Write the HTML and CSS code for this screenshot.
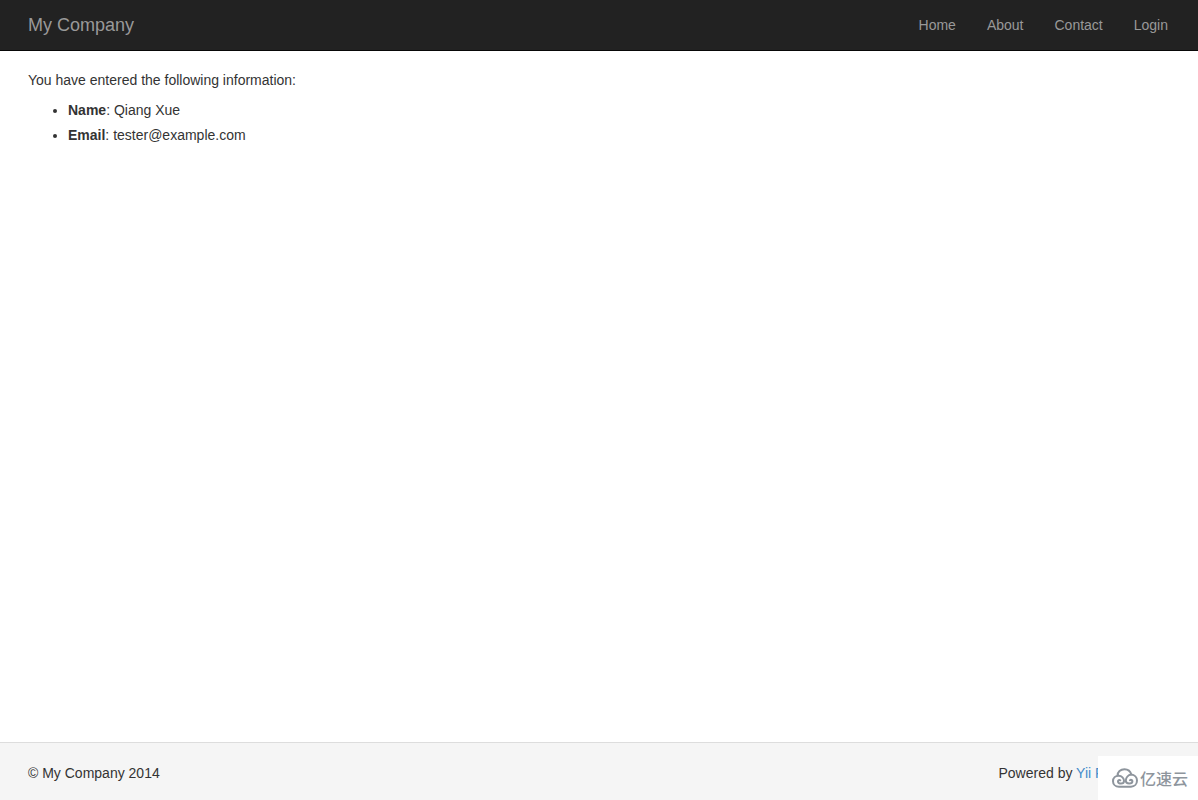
FILE: index.html
```html
<!DOCTYPE html>
<html lang="en">
<head>
<meta charset="utf-8">
<title>My Company</title>
<link rel="stylesheet" href="styles.css">
</head>
<body>
<header class="navbar">
  <a class="brand" href="#">My Company</a>
  <nav class="nav">
    <a class="nav-link" href="#">Home</a>
    <a class="nav-link" href="#">About</a>
    <a class="nav-link" href="#">Contact</a>
    <a class="nav-link" href="#">Login</a>
  </nav>
</header>
<main class="content">
  <p class="intro">You have entered the following information:</p>
  <ul class="entries">
    <li><strong>Name</strong>: Qiang Xue</li>
    <li><strong>Email</strong>: tester@example.com</li>
  </ul>
</main>
<footer class="footer">
  <span>© My Company 2014</span>
  <span>Powered by <a class="footer-link" href="#">Yii Framework</a></span>
</footer>
<div class="badge">
  <svg class="badge-icon" viewBox="0 0 26 20" aria-hidden="true">
    <path d="M5.500 7.800C5.500 4 8.500 1.200 12.500 1.200C16 1.200 18.500 3.300 19.300 6.500C22.500 6.700 25 9.300 25 12.500C25 16 22.500 18.700 19 18.700H7C3.500 18.700 1 16.300 1 13.200C1 10 3.500 7.800 6.700 7.800C9.800 7.800 12 10.300 12 13C12 14.800 10.500 15.600 9 15.600C7.400 15.600 6 14.900 6 13.500C6 12.300 7.300 11.800 8.300 12.300"/>
    <path d="M19.300 6.500C16.200 7 13.800 9.500 13.800 12.600C13.800 14.600 15.400 15.600 17.200 15.600C18.900 15.600 20.400 14.800 20.400 13.300C20.400 12 18.900 11.500 17.900 12.200"/>
  </svg>
  <span>亿速云</span>
</div>
</body>
</html>
```
FILE: styles.css
```css
* {
  box-sizing: border-box;
}

body {
  display: flex;
  flex-direction: column;
  min-height: 100vh;
  margin: 0;
  background: #fff;
  color: #333;
  font: 14px/20px "Liberation Sans", Arial, sans-serif;
}

a {
  text-decoration: none;
}

.navbar {
  display: flex;
  align-items: center;
  justify-content: space-between;
  padding: 15px 30px 15px 28px;
  background: #222;
  border-bottom: 1px solid #080808;
}

.brand {
  color: #999;
  font-size: 18px;
}

.nav {
  display: flex;
  gap: 31px;
}

.nav-link {
  color: #999;
}

.content {
  flex: 1;
  padding: 19px 28px;
}

.intro {
  margin: 0 0 8px;
}

.entries {
  margin: 0;
  padding-left: 40px;
  line-height: 25px;
}

.footer {
  display: flex;
  justify-content: space-between;
  padding: 20px 33px 17px 28px;
  background: #f5f5f5;
  border-top: 1px solid #ddd;
}

.footer-link {
  color: #428bca;
}

.badge {
  position: fixed;
  right: 0;
  bottom: 0;
  display: flex;
  align-items: center;
  gap: 2px;
  padding: 12px 10px 12px 14px;
  background: #fff;
  color: #8e959d;
  font: 500 16px/20px "Noto Sans CJK SC", sans-serif;
}

.badge-icon {
  width: 26px;
  height: 20px;
  fill: none;
  stroke: #8e959d;
  stroke-width: 2;
  stroke-linecap: round;
}
```
